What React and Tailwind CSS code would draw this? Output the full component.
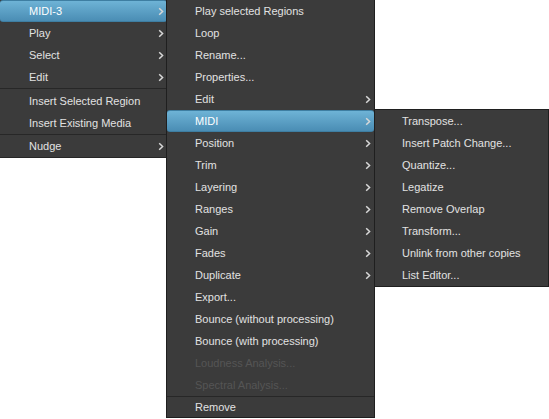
import React from 'react';

const Chevron = () => (
  <svg width="6" height="9" viewBox="0 0 6 9" className="shrink-0">
    <path d="M1.2 1.2 L4.6 4.5 L1.2 7.8" fill="none" stroke="#d8d8d8" strokeWidth="1.5" />
  </svg>
);

const Item = ({ label, sub, active, disabled, textX, h = 'h-[22px]' }) => (
  <div
    className={`${h} flex items-center pr-[3px] ${
      active
        ? 'bg-gradient-to-b from-[#6eb3d6] to-[#4a8db4] rounded-[3px] border-y border-[#3e7ea2] text-white'
        : disabled
        ? 'text-[#555555]'
        : 'text-[#e2e2e2]'
    }`}
  >
    <span className={`${textX} flex-1 whitespace-nowrap`}>{label}</span>
    {sub && <Chevron />}
  </div>
);

const Sep = ({ thick }) => (
  <div className={`${thick ? 'h-[2px]' : 'h-px'} border-t border-[#272727]`} />
);

const menu1 = [
  { label: 'MIDI-3', sub: true, active: true },
  { label: 'Play', sub: true },
  { label: 'Select', sub: true },
  { label: 'Edit', sub: true },
  'sep2',
  { label: 'Insert Selected Region' },
  { label: 'Insert Existing Media' },
  'sep',
  { label: 'Nudge', sub: true },
];

const menu2 = [
  { label: 'Play selected Regions' },
  { label: 'Loop' },
  { label: 'Rename...' },
  { label: 'Properties...' },
  { label: 'Edit', sub: true },
  { label: 'MIDI', sub: true, active: true },
  { label: 'Position', sub: true },
  { label: 'Trim', sub: true },
  { label: 'Layering', sub: true },
  { label: 'Ranges', sub: true },
  { label: 'Gain', sub: true },
  { label: 'Fades', sub: true },
  { label: 'Duplicate', sub: true },
  { label: 'Export...' },
  { label: 'Bounce (without processing)' },
  { label: 'Bounce (with processing)' },
  { label: 'Loudness Analysis...', disabled: true },
  { label: 'Spectral Analysis...', disabled: true },
  'sep2',
  { label: 'Remove', h: 'h-[19px]' },
];

const menu3 = [
  { label: 'Transpose...' },
  { label: 'Insert Patch Change...' },
  { label: 'Quantize...' },
  { label: 'Legatize' },
  { label: 'Remove Overlap' },
  { label: 'Transform...' },
  { label: 'Unlink from other copies' },
  { label: 'List Editor...' },
];

const Menu = ({ items, textX }) =>
  items.map((it, i) =>
    it === 'sep' || it === 'sep2' ? (
      <Sep key={i} thick={it === 'sep2'} />
    ) : (
      <Item key={i} {...it} textX={textX} />
    )
  );

export default function App() {
  return (
    <div
      className="relative w-[549px] h-[419px] bg-white overflow-hidden text-[11px] leading-none"
      style={{ fontFamily: '"Liberation Sans", Arial, sans-serif' }}
    >
      <div className="absolute left-0 top-0 w-[167px] flex flex-col bg-[#3b3b3b] border-b border-[#262626]">
        <Menu items={menu1} textX="pl-[29px]" />
      </div>

      <div className="absolute left-[166px] top-0 w-[209px] flex flex-col bg-[#3b3b3b] border-l border-r border-b border-[#1f1f1f]">
        <Menu items={menu2} textX="pl-[28px]" />
      </div>

      <div className="absolute left-[374px] top-[109px] w-[175px] flex flex-col bg-[#3b3b3b] border border-[#1f1f1f]">
        <Menu items={menu3} textX="pl-[27px]" />
      </div>
    </div>
  );
}
